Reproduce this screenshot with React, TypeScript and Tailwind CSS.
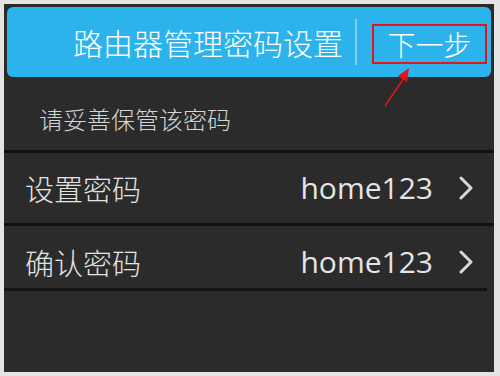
import React from "react";

const cjk = { fontFamily: '"Noto Sans CJK SC", "Noto Sans", sans-serif' };
const latin = { fontFamily: '"Open Sans", "Noto Sans CJK SC", sans-serif' };

function Chevron() {
  return (
    <svg width="16" height="24" viewBox="0 0 16 24" className="shrink-0">
      <path d="M3 2 L13 12 L3 22" fill="none" stroke="#d8d8d8" strokeWidth="3" strokeLinecap="round" strokeLinejoin="round" />
    </svg>
  );
}

function Row({ label, value, className }: { label: string; value: string; className: string }) {
  return (
    <div className={`flex items-center justify-between pl-[21px] pr-[20px] ${className}`}>
      <span className="text-[29px] font-light leading-none text-[#e4e4e4]" style={cjk}>
        {label}
      </span>
      <div className="flex items-center gap-[25px]">
        <span className="text-[30px] leading-none text-[#e4e4e4]" style={latin}>
          {value}
        </span>
        <Chevron />
      </div>
    </div>
  );
}

export default function App() {
  return (
    <div className="w-[500px] h-[376px] bg-[#e4e4e4] pl-[4px] pt-[4px] pr-[6px] pb-[4px]">
      <div className="relative flex h-full flex-col bg-[#2b2b2b]">
        {/* header bar */}
        <div className="mx-[3px] mt-[3px] flex h-[70px] items-center rounded-[6px] bg-[#2db3ec]">
          <span className="ml-[66px] text-[30px] font-light leading-none text-white" style={cjk}>
            路由器管理密码设置
          </span>
          <div className="ml-[12px] h-[46px] w-[2px] bg-[#7fd0f2]" />
          <div className="ml-[15px] mt-[4px] flex h-[40px] w-[115px] items-center justify-center border-2 border-[#e3141c]">
            <span className="text-[28px] font-light leading-none text-white" style={cjk}>
              下一步
            </span>
          </div>
        </div>

        {/* hint */}
        <div className="flex h-[73px] items-center pl-[35px] pt-[10px]">
          <span className="text-[24px] font-light leading-none text-[#d6d6d6]" style={cjk}>
            请妥善保管该密码
          </span>
        </div>
        <div className="h-[3px] bg-[#111111]" />

        <Row label="设置密码" value="home123" className="h-[70px]" />
        <div className="h-[3px] bg-[#111111]" />
        <Row label="确认密码" value="home123" className="h-[62px] pt-[10px]" />
        <div className="mr-[7px] h-[3px] bg-[#141414]" />

        {/* annotation arrow */}
        <svg className="absolute left-[372px] top-[58px]" width="40" height="48" viewBox="0 0 40 48">
          <line x1="9" y1="44" x2="28" y2="16" stroke="#e3141c" strokeWidth="1.5" />
          <polygon points="33,6 22,14 31,20" fill="#e3141c" />
        </svg>
      </div>
    </div>
  );
}
